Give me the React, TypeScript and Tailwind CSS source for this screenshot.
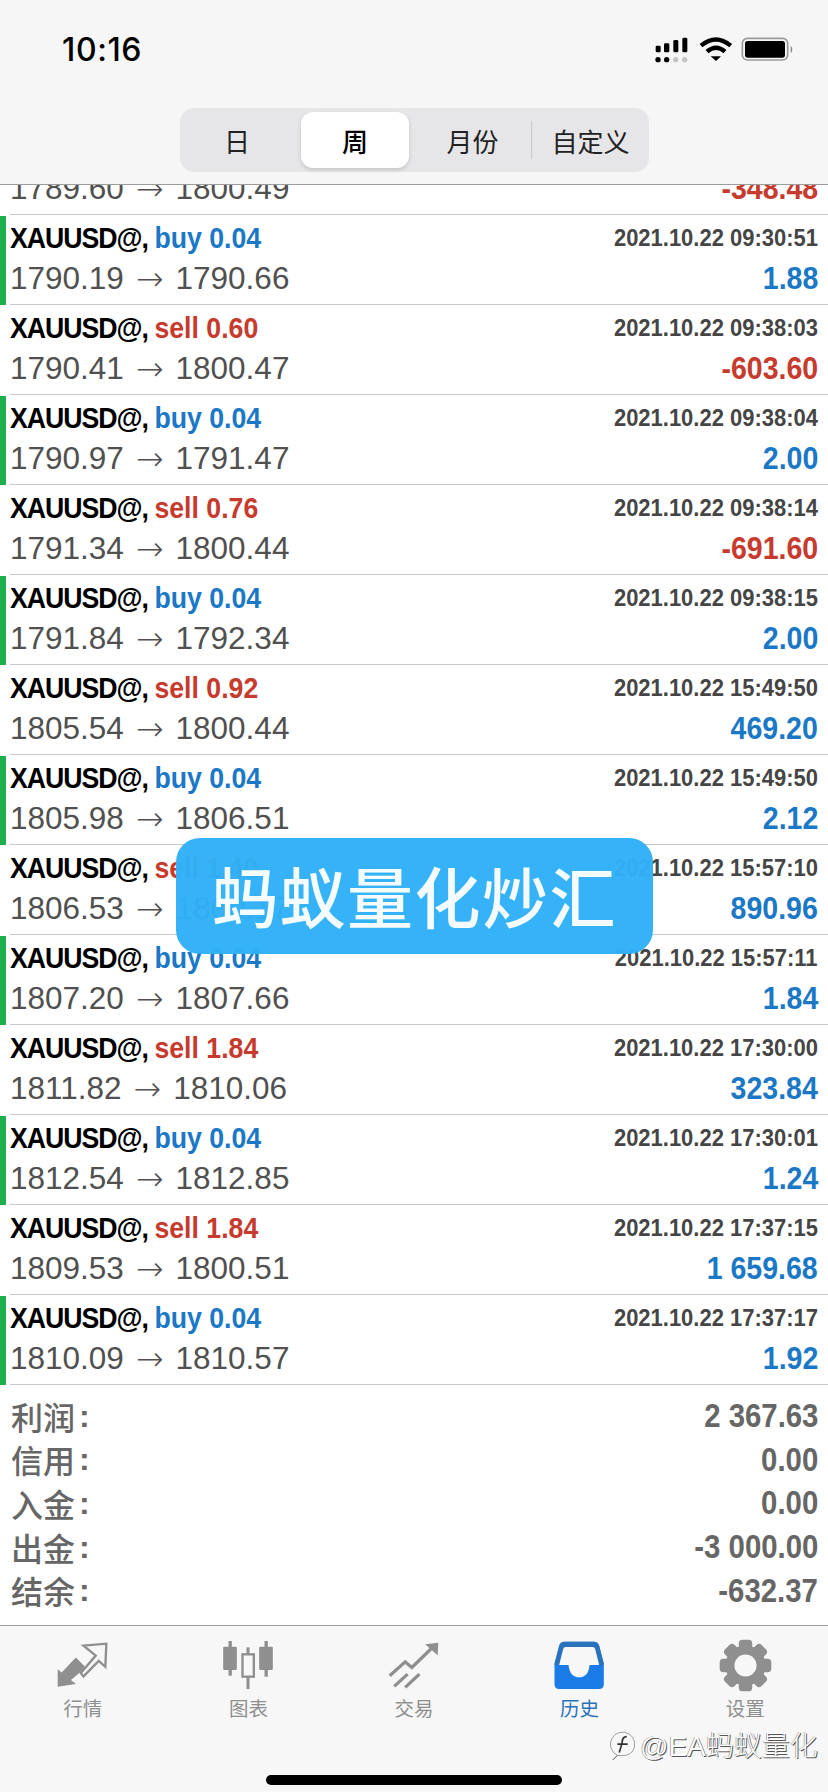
const sans = "font-['Liberation_Sans','Noto_Sans_CJK_SC',sans-serif]";
const cjk = "font-['Noto_Sans_CJK_SC',sans-serif]";

type Row = { side: "buy" | "sell"; lot: string; time: string; from: string; to: string; pnl: string };

const rows: Row[] = [
  { side: "buy", lot: "0.04", time: "09:30:51", from: "1790.19", to: "1790.66", pnl: "1.88" },
  { side: "sell", lot: "0.60", time: "09:38:03", from: "1790.41", to: "1800.47", pnl: "-603.60" },
  { side: "buy", lot: "0.04", time: "09:38:04", from: "1790.97", to: "1791.47", pnl: "2.00" },
  { side: "sell", lot: "0.76", time: "09:38:14", from: "1791.34", to: "1800.44", pnl: "-691.60" },
  { side: "buy", lot: "0.04", time: "09:38:15", from: "1791.84", to: "1792.34", pnl: "2.00" },
  { side: "sell", lot: "0.92", time: "15:49:50", from: "1805.54", to: "1800.44", pnl: "469.20" },
  { side: "buy", lot: "0.04", time: "15:49:50", from: "1805.98", to: "1806.51", pnl: "2.12" },
  { side: "sell", lot: "1.40", time: "15:57:10", from: "1806.53", to: "1800.17", pnl: "890.96" },
  { side: "buy", lot: "0.04", time: "15:57:11", from: "1807.20", to: "1807.66", pnl: "1.84" },
  { side: "sell", lot: "1.84", time: "17:30:00", from: "1811.82", to: "1810.06", pnl: "323.84" },
  { side: "buy", lot: "0.04", time: "17:30:01", from: "1812.54", to: "1812.85", pnl: "1.24" },
  { side: "sell", lot: "1.84", time: "17:37:15", from: "1809.53", to: "1800.51", pnl: "1 659.68" },
  { side: "buy", lot: "0.04", time: "17:37:17", from: "1810.09", to: "1810.57", pnl: "1.92" },
];

const summary = [
  ["利润", "2 367.63"],
  ["信用", "0.00"],
  ["入金", "0.00"],
  ["出金", "-3 000.00"],
  ["结余", "-632.37"],
];

function TradeRow({ r }: { r: Row }) {
  const loss = r.pnl.startsWith("-");
  return (
    <div className="flex h-[90px] shrink-0">
      <div className={r.side === "buy" ? "w-[6px] bg-[#1fae4b] mt-px" : "w-[6px]"} />
      <div className="flex-1 ml-[4px] border-b border-[#c9c9c9] pt-[3px] pr-[10px]">
        <div className="flex justify-between h-[40px] leading-[40px] items-center">
          <div className="origin-left scale-x-[.92] whitespace-nowrap text-[29px] font-bold">
            <span className="text-black tracking-[-1.1px]">XAUUSD@, </span>
            <span className={r.side === "buy" ? "text-[#1b78c6]" : "text-[#c73a2e]"}>
              {r.side} {r.lot}
            </span>
          </div>
          <div className="origin-right scale-x-[.915] whitespace-nowrap text-[24px] font-bold text-[#454545]">
            2021.10.22 {r.time}
          </div>
        </div>
        <div className="flex justify-between h-[41px] leading-[41px] items-center">
          <div className="flex items-center whitespace-nowrap text-[31.5px] text-[#505050]">
            <span>{r.from}</span>
            <span className="mx-[12px] font-['DejaVu_Sans',sans-serif] text-[33px] font-light leading-none">→</span>
            <span>{r.to}</span>
          </div>
          <div
            className={
              "origin-right scale-x-[.92] whitespace-nowrap text-[31px] font-bold " +
              (loss ? "text-[#c73a2e]" : "text-[#1b78c6]")
            }
          >
            {r.pnl}
          </div>
        </div>
      </div>
    </div>
  );
}

function StatusIcons() {
  return (
    <svg viewBox="0 0 510 150" className="w-[170px] h-[50px]">
      <rect x="47" y="62" width="15" height="20" rx="4" fill="#000" />
      <rect x="72" y="55" width="16" height="27" rx="4" fill="#000" />
      <rect x="100" y="45" width="15" height="37" rx="4" fill="#000" />
      <rect x="127" y="38" width="15" height="44" rx="4" fill="#000" />
      <circle cx="54" cy="104" r="8" fill="#000" />
      <circle cx="80" cy="104" r="8" fill="#000" />
      <circle cx="107" cy="104" r="8" fill="#c4c4c4" />
      <circle cx="134" cy="104" r="8" fill="#c4c4c4" />
      <path d="M183 62 Q228 25 272 62" fill="none" stroke="#000" strokeWidth="13" />
      <path d="M201 80 Q228 56 255 80" fill="none" stroke="#000" strokeWidth="13" />
      <path d="M212 94 L243 94 L228 108 Z" fill="#000" />
      <rect x="307" y="40" width="136" height="65" rx="15" fill="none" stroke="#9a9a9a" strokeWidth="5" />
      <rect x="315" y="48" width="120" height="50" rx="8" fill="#000" />
      <path d="M452 62 Q462 73 452 85 Z" fill="#888" />
    </svg>
  );
}

function Segmented() {
  return (
    <div className={`${cjk} relative mt-[33px] ml-[180px] flex h-[64px] w-[469px] items-center rounded-[14px] bg-[#e6e6e8] text-[26px] text-[#222]`}>
      <div className="flex h-full w-[121px] items-center justify-center pr-[7px]">日</div>
      <div className="flex h-[56px] w-[108px] items-center justify-center rounded-[12px] bg-white font-medium text-black shadow-[0_2px_4px_rgba(0,0,0,0.15)]">周</div>
      <div className="flex h-[38px] w-[123px] items-center justify-center border-r border-[#c8c8ca] pl-[5px]">月份</div>
      <div className="flex h-full w-[117px] items-center justify-center">自定义</div>
    </div>
  );
}

const gray = "#8f8f8f";

function MarketIcon() {
  return (
    <svg viewBox="40 30 170 145" className="h-[48px] w-[57px]">
      <path d="M50 115 L62 125 L105 80 L135 110 L90 148 L105 160 L50 168 Z" fill={gray} />
      <path d="M128 44 L197 38 L194 108 L174 90 L128 137 L120 127 L165 74 Z" fill="none" stroke={gray} strokeWidth="7" />
    </svg>
  );
}

function ChartIcon() {
  return (
    <svg viewBox="540 25 170 150" className="h-[50px] w-[57px]">
      <rect x="549" y="45" width="41" height="70" rx="3" fill={gray} />
      <rect x="565" y="28" width="10" height="104" fill={gray} />
      <rect x="607" y="68" width="34" height="67" fill="none" stroke={gray} strokeWidth="7" />
      <rect x="619" y="47" width="9" height="21" fill={gray} />
      <rect x="619" y="135" width="9" height="37" fill={gray} />
      <rect x="657" y="45" width="41" height="70" rx="3" fill={gray} />
      <rect x="673" y="28" width="10" height="107" fill={gray} />
    </svg>
  );
}

function TradeIcon() {
  return (
    <svg viewBox="45 25 170 145" className="h-[48px] w-[57px]">
      <path d="M58 130 L105 88 L125 105 L188 44" fill="none" stroke={gray} strokeWidth="10" />
      <path d="M165 35 L205 30 L203 68 Z" fill={gray} />
      <path d="M72 162 L112 125 M105 165 L148 125" fill="none" stroke={gray} strokeWidth="10" />
    </svg>
  );
}

function HistoryIcon() {
  return (
    <svg viewBox="540 25 170 150" className="h-[50px] w-[57px]">
      <path d="M580 30 L668 30 Q680 30 684 42 L698 95 L698 158 Q698 172 684 172 L564 172 Q550 172 550 158 L550 95 L564 42 Q568 30 580 30 Z" fill="#1b7ce8" />
      <path d="M580 30 L668 30 Q680 30 684 42 L698 100 L550 100 L564 42 Q568 30 580 30 Z" fill="#2a72bb" />
      <path d="M583 46 L665 46 Q670 46 672 52 L684 100 L655 100 Q652 137 624 137 Q596 137 592 100 L564 100 L576 52 Q578 46 583 46 Z" fill="#f7f7f7" />
    </svg>
  );
}

function GearIcon() {
  const teeth = [0, 45, 90, 135, 180, 225, 270, 315];
  return (
    <svg viewBox="230 20 164 164" className="h-[55px] w-[55px]">
      {teeth.map((a) => (
        <rect key={a} x="292" y="25" width="40" height="40" rx="11" fill={gray} transform={`rotate(${a} 312 102)`} />
      ))}
      <circle cx="312" cy="102" r="60" fill={gray} />
      <circle cx="312" cy="102" r="33" fill="#f7f7f7" />
    </svg>
  );
}

const tabs = [
  { label: "行情", icon: <MarketIcon />, active: false },
  { label: "图表", icon: <ChartIcon />, active: false },
  { label: "交易", icon: <TradeIcon />, active: false },
  { label: "历史", icon: <HistoryIcon />, active: true },
  { label: "设置", icon: <GearIcon />, active: false },
];

export default function App() {
  return (
    <div className={`${sans} relative flex h-[1792px] w-[828px] flex-col overflow-hidden bg-white`}>
      <header className="relative z-10 h-[185px] shrink-0 border-b border-[#9c9c9c] bg-[#f6f6f6] pt-[25px]">
        <div className="flex h-[50px] items-center justify-between pl-[62px] pr-[18px]">
          <span className="font-['Inter',sans-serif] text-[32px] font-medium tracking-[0.6px] text-black">10:16</span>
          <StatusIcons />
        </div>
        <Segmented />
      </header>

      <div className="-mt-[60px] flex shrink-0 flex-col">
        <TradeRow r={{ side: "sell", lot: "0.44", time: "09:30:50", from: "1789.60", to: "1800.49", pnl: "-348.48" }} />
        {rows.map((r) => (
          <TradeRow key={r.time + r.side} r={r} />
        ))}
      </div>

      <section className="flex-1 pl-[11px] pr-[10px] pt-[9px]">
        {summary.map(([k, v]) => (
          <div key={k} className="flex h-[43.6px] items-center justify-between text-[#666]">
            <span className={`${cjk} flex items-center text-[32px] font-medium leading-none`}>
              {k}
              <span className="ml-[4px] font-['Liberation_Sans',sans-serif] font-bold">:</span>
            </span>
            <span className="origin-right scale-x-[.89] text-[33px] font-bold leading-none">{v}</span>
          </div>
        ))}
      </section>

      <footer className={`${cjk} relative h-[167px] shrink-0 border-t border-[#9c9c9c] bg-[#f7f7f7]`}>
        <div className="grid grid-cols-5 pt-[13px]">
          {tabs.map((t) => (
            <div key={t.label} className="flex flex-col items-center">
              <div className="flex h-[52px] items-center justify-center">{t.icon}</div>
              <span className={`mt-[5px] text-[19.5px] leading-[24px] ${t.active ? "text-[#2a72bb]" : "text-[#8f8f8f]"}`}>{t.label}</span>
            </div>
          ))}
        </div>
        <div className="mx-auto mt-[55px] h-[10px] w-[296px] rounded-full bg-black" />
        <div className="absolute left-[608px] top-[102px] flex items-center">
          <svg viewBox="0 0 32 34" className="h-[34px] w-[30px]">
            <path d="M10 28 A13 13 0 1 1 26 24 Q20 30 10 28 L5 33 Z" fill="none" stroke="#fff" strokeWidth="2.4" />
            <path d="M10 28 A13 13 0 1 1 26 24 Q20 30 10 28 L5 33 Z" fill="none" stroke="#444" strokeWidth="0.6" />
            <path d="M20 8 Q15 8 15 15 L12 25 M10 16 L21 16" fill="none" stroke="#333" strokeWidth="1.8" />
          </svg>
          <span className="ml-[2px] whitespace-nowrap text-[28px] font-light leading-none text-white [text-shadow:1px_1px_0_#555,-0.5px_-0.5px_0_#777]">
            <span className="font-['Liberation_Sans',sans-serif]">@EA</span>蚂蚁量化
          </span>
        </div>
      </footer>

      <div className={`${cjk} absolute left-[176px] top-[838px] z-20 flex h-[116px] w-[477px] items-center justify-center rounded-[24px] bg-[#2fb0f8]/97 pb-[4px] text-[66px] font-medium leading-none text-[#f4fcff] tracking-[1.5px]`}>
        蚂蚁量化炒汇
      </div>
    </div>
  );
}
